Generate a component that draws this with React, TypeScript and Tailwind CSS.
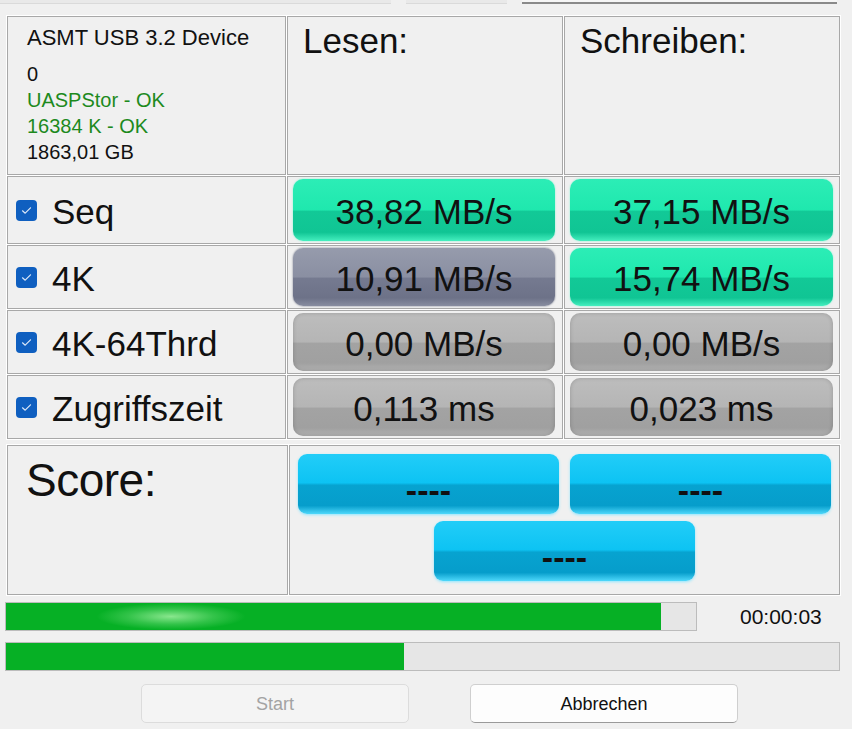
import React from "react";

type Tone = "green" | "slate" | "gray";

const toneClasses: Record<Tone, string> = {
  green:
    "bg-[linear-gradient(to_bottom,#2cedb6_0%,#1fe8ae_50%,#12c997_52%,#10c594_86%,#45efbf_100%)] shadow-[0_0_2px_#7af5d0]",
  slate:
    "bg-[linear-gradient(to_bottom,#969bac_0%,#8a8fa2_50%,#757a90_52%,#6d7288_86%,#888da0_100%)] shadow-[0_0_2px_#6a6f80]",
  gray:
    "bg-[linear-gradient(to_bottom,#bdbdbd_0%,#b5b5b5_50%,#a3a3a3_52%,#a0a0a0_86%,#b2b2b2_100%)] shadow-[inset_0_0_4px_rgba(0,0,0,0.18)]",
};

const rows: { label: string; read: string; write: string; readTone: Tone; writeTone: Tone }[] = [
  { label: "Seq", read: "38,82 MB/s", write: "37,15 MB/s", readTone: "green", writeTone: "green" },
  { label: "4K", read: "10,91 MB/s", write: "15,74 MB/s", readTone: "slate", writeTone: "green" },
  { label: "4K-64Thrd", read: "0,00 MB/s", write: "0,00 MB/s", readTone: "gray", writeTone: "gray" },
  { label: "Zugriffszeit", read: "0,113 ms", write: "0,023 ms", readTone: "gray", writeTone: "gray" },
];

function Check() {
  return (
    <span className="w-[21px] h-[21px] rounded-[4px] bg-[#0f5fc0] flex items-center justify-center shrink-0">
      <svg width="11" height="9" viewBox="0 0 11 9" fill="none">
        <path d="M1.5 4.8 L4.2 7.2 L9.5 1.8" stroke="#dce8f8" strokeWidth="1.2" strokeLinecap="round" strokeLinejoin="round" />
      </svg>
    </span>
  );
}

function ValueBar({ tone, text }: { tone: Tone; text: string }) {
  return (
    <div
      className={`h-full rounded-[10px] flex items-center justify-center text-[35px] leading-none text-[#111] ${toneClasses[tone]}`}
    >
      <span className="pt-[3px]">{text}</span>
    </div>
  );
}

function ScoreButton() {
  return (
    <div className="w-[261px] h-[60px] rounded-[9px] bg-[linear-gradient(to_bottom,#22cdf8_0%,#0dc3f3_48%,#07a3d0_52%,#069dcb_86%,#4ed8fb_100%)] shadow-[0_1px_3px_#8fe6ff] flex items-center justify-center">
      <span className="text-[34px] font-bold leading-none text-[#111] pt-[12px]">----</span>
    </div>
  );
}

export default function App() {
  return (
    <div className="w-[852px] h-[729px] bg-[#f0f0f0] overflow-hidden font-['Liberation_Sans',Arial,sans-serif] text-[#111]">
      {/* cut-off controls at the top */}
      <div className="flex h-[4px]">
        <div className="w-[391px] bg-[#e9e9e9] border-b border-[#dadada]" />
        <div className="w-[101px] ml-[15px] bg-[#e9e9e9] border-b border-[#dadada]" />
        <div className="w-[315px] ml-[15px] bg-[#f6f6f6] border-b-2 border-[#8a8a8a]" />
      </div>

      {/* results grid */}
      <div className="ml-[6px] mt-[11px] w-[835px] p-px bg-white grid grid-cols-[279px_276px_276px] grid-rows-[159px_68px_64px_64px_64px] gap-px">
        <div className="bg-[#f0f0f0] border border-[#a8a8a8] pl-[19px] pt-[8px]">
          <div className="text-[22px] leading-[26px]">ASMT USB 3.2 Device</div>
          <div className="text-[20px] leading-[26px] mt-[10px]">0</div>
          <div className="text-[20px] leading-[26px] text-[#1d8a1d]">UASPStor - OK</div>
          <div className="text-[20px] leading-[26px] text-[#1d8a1d]">16384 K - OK</div>
          <div className="text-[20px] leading-[26px]">1863,01 GB</div>
        </div>
        <div className="bg-[#f0f0f0] border border-[#a8a8a8] pl-[15px] pt-[4px] text-[35px] leading-[40px]">Lesen:</div>
        <div className="bg-[#f0f0f0] border border-[#a8a8a8] pl-[15px] pt-[4px] text-[35px] leading-[40px]">Schreiben:</div>

        {rows.map((r) => (
          <React.Fragment key={r.label}>
            <div className="bg-[#f0f0f0] border border-[#a8a8a8] flex items-center gap-[15px] pl-[8px]">
              <Check />
              <span className="text-[35px] leading-none pt-[3px]">{r.label}</span>
            </div>
            <div className="bg-[#f0f0f0] border border-[#a8a8a8] pl-[5px] pr-[7px] py-[2px]">
              <ValueBar tone={r.readTone} text={r.read} />
            </div>
            <div className="bg-[#f0f0f0] border border-[#a8a8a8] pl-[5px] pr-[6px] py-[2px]">
              <ValueBar tone={r.writeTone} text={r.write} />
            </div>
          </React.Fragment>
        ))}
      </div>

      {/* score */}
      <div className="ml-[6px] mt-[4px] w-[835px] h-[152px] p-px bg-white grid grid-cols-[281px_551px] gap-px">
        <div className="bg-[#f0f0f0] border border-[#a8a8a8] pl-[18px] pt-[8px] text-[46px] leading-[52px] tracking-[-0.5px]">Score:</div>
        <div className="bg-[#f0f0f0] border border-[#a8a8a8] flex flex-col items-center pt-[8px] gap-[7px]">
          <div className="flex gap-[11px]">
            <ScoreButton />
            <ScoreButton />
          </div>
          <ScoreButton />
        </div>
      </div>

      {/* progress */}
      <div className="flex items-center mt-[6px] ml-[5px]">
        <div className="w-[692px] h-[29px] border border-[#bcbcbc] bg-[#e6e6e6] relative overflow-hidden">
          <div className="h-full w-[655px] bg-[#06b025] relative">
            <div className="absolute inset-y-0 left-[90px] w-[150px] bg-[radial-gradient(ellipse_at_center,rgba(160,240,160,0.85)_0%,rgba(120,225,130,0.4)_40%,rgba(6,176,37,0)_70%)]" />
          </div>
        </div>
        <span className="ml-[43px] text-[21px] leading-none">00:00:03</span>
      </div>
      <div className="ml-[5px] mt-[11px] w-[835px] h-[29px] border border-[#bcbcbc] bg-[#e6e6e6]">
        <div className="h-full w-[398px] bg-[#06b025]" />
      </div>

      {/* buttons */}
      <div className="flex mt-[13px] ml-[141px] gap-[61px]">
        <div className="w-[268px] h-[39px] rounded-[5px] border border-[#dcdcdc] bg-[#f4f4f4] flex items-center justify-center text-[18px] text-[#a3a3a3] pt-[2px]">
          Start
        </div>
        <div className="w-[268px] h-[39px] rounded-[5px] border border-[#cfcfcf] border-b-[#9a9a9a] bg-[#fdfdfd] flex items-center justify-center text-[18px] text-[#111] pt-[2px]">
          Abbrechen
        </div>
      </div>
    </div>
  );
}
